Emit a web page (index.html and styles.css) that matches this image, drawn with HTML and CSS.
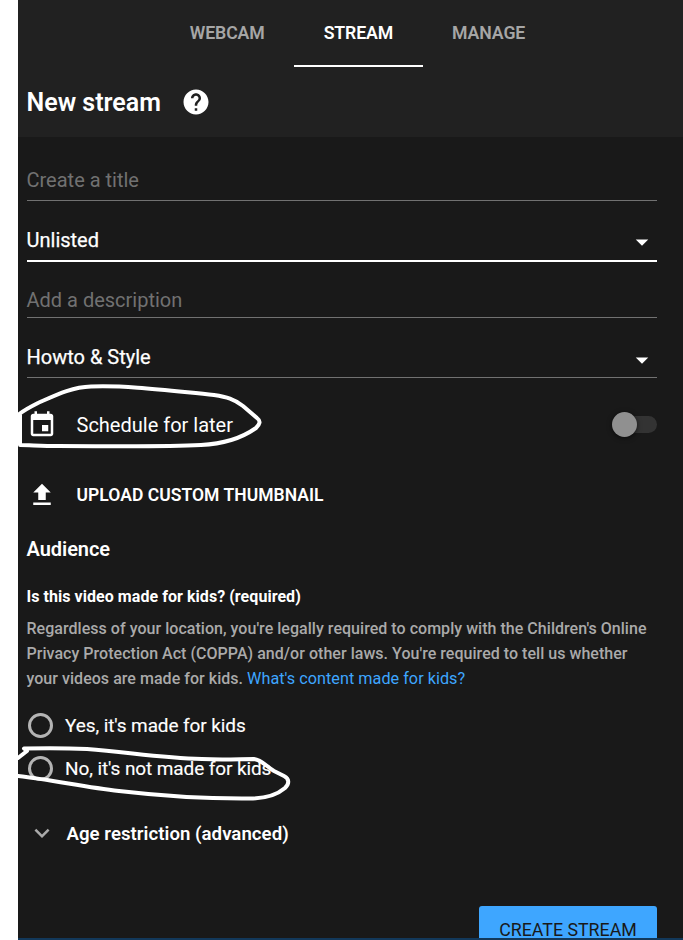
FILE: index.html
```html
<!DOCTYPE html>
<html lang="en">
<head>
<meta charset="utf-8">
<title>New stream</title>
<link rel="stylesheet" href="styles.css">
</head>
<body>
<main class="panel">
  <header class="top">
    <nav class="tabs">
      <a class="tab"><span>WEBCAM</span></a>
      <a class="tab active"><span>STREAM</span></a>
      <a class="tab"><span>MANAGE</span></a>
    </nav>
    <div class="heading">
      <h1>New stream</h1>
      <svg class="icon" viewBox="0 0 24 24"><path d="M12 2C6.48 2 2 6.48 2 12s4.48 10 10 10 10-4.48 10-10S17.52 2 12 2zm1 17h-2v-2h2v2zm2.07-7.75l-.9.92C13.45 12.9 13 13.5 13 15h-2v-.5c0-1.1.45-2.1 1.17-2.83l1.24-1.26c.37-.36.59-.86.59-1.41 0-1.1-.9-2-2-2s-2 .9-2 2H8c0-2.21 1.79-4 4-4s4 1.79 4 4c0 .88-.36 1.68-.93 2.25z"/></svg>
    </div>
  </header>
  <form class="form">
    <div class="field title"><span>Create a title</span></div>
    <div class="field privacy"><span>Unlisted</span><svg class="icon" viewBox="0 0 24 24"><path d="M7 10l5 5 5-5z"/></svg></div>
    <div class="field description"><span>Add a description</span></div>
    <div class="field category"><span>Howto &amp; Style</span><svg class="icon" viewBox="0 0 24 24"><path d="M7 10l5 5 5-5z"/></svg></div>
    <div class="row schedule">
      <svg class="icon" viewBox="0 0 24 24"><path d="M17 12h-5v5h5v-5zM16 1v2H8V1H6v2H5c-1.11 0-1.99.9-1.99 2L3 19c0 1.1.89 2 2 2h14c1.1 0 2-.9 2-2V5c0-1.1-.9-2-2-2h-1V1h-2zm3 18H5V8h14v11z"/></svg>
      <span>Schedule for later</span>
      <div class="toggle"><div class="track"></div><div class="knob"></div></div>
    </div>
    <div class="row upload">
      <svg class="icon" viewBox="0 0 24 24"><path d="M9 16h6v-6h4l-7-7-7 7h4zm-4 2h14v2H5z"/></svg>
      <span>UPLOAD CUSTOM THUMBNAIL</span>
    </div>
    <h2>Audience</h2>
    <h3>Is this video made for kids? (required)</h3>
    <p class="legal">Regardless of your location, you're legally required to comply with the Children's Online<br>Privacy Protection Act (COPPA) and/or other laws. You're required to tell us whether<br>your videos are made for kids. <a>What's content made for kids?</a></p>
    <div class="option"><i class="radio"></i><span>Yes, it's made for kids</span></div>
    <div class="option"><i class="radio"></i><span>No, it's not made for kids</span></div>
    <div class="age">
      <svg class="icon chevron" viewBox="0 0 24 24"><path d="M7.41 8.59L12 13.17l4.59-4.58L18 10l-6 6-6-6z"/></svg>
      <span>Age restriction (advanced)</span>
    </div>
    <div class="actions"><button type="button">CREATE STREAM</button></div>
  </form>
  <svg class="ink" viewBox="0 0 665 940">
    <path d="M0 415C6 410 12 407 20 403C38 395 54 387 73 386.500C110 385 154 391 196 395C209 397 216 399 225 406L239 418C243 421 242 424 238 428C224 438 205 444 183 445C143 447 90 446 40 446C24 446 11 445 2 445L2 415"/>
    <path d="M0 758L9 751L6 748.500C28 748 48 748 69 749C110 752 142 758 184 759C205 760 222 759 236 759C244 760 249 767 256 771L266 776C272 779 271 784 267 788C260 794 249 798 235 798.500C196 799 144 796 101 791C66 787 35 780 0 776"/>
  </svg>
  <div class="edge"></div>
</main>
</body>
</html>
```
FILE: styles.css
```css
* { box-sizing: border-box; }
body { margin: 0; background: #fff; font-family: Roboto, "Liberation Sans", sans-serif; color: #fff; overflow: hidden; }
.panel { position: relative; margin-left: 18px; width: 665px; height: 940px; background: #191919; overflow: hidden; }
.icon { width: 30px; height: 30px; fill: #fff; flex: none; display: block; }
.top { height: 137px; background: #212121; }
.tabs { height: 67px; display: flex; justify-content: center; padding-left: 14px; }
.tab { padding: 0 29.5px; height: 67px; display: flex; align-items: center; justify-content: center; font-size: 17.7px; font-weight: 600; letter-spacing: -.12px; color: #a6a6a6; border-bottom: 2px solid transparent; }
.tab.active { color: #fff; border-color: #fff; }
.heading { display: flex; align-items: center; height: 70px; padding-left: 8.5px; gap: 20px; }
h1, h2, h3, p { margin: 0; }
h1 { width: 134.5px; font-size: 25px; font-weight: 600; letter-spacing: 0; white-space: nowrap; }
.form { padding: 0 26px 0 9px; white-space: nowrap; }
.field { display: flex; align-items: center; justify-content: space-between; border-bottom: 1px solid #717171; font-size: 20px; }
.field span { margin-left: -.5px; }
.title, .description { color: #717171; }
.title { height: 64px; padding-top: 23px; }
.privacy { height: 61px; padding-top: 19px; border-bottom: 2px solid #fff; }
.privacy .icon { margin: 2px 0 -2px; }
.privacy span, .category span { -webkit-text-stroke: .25px #fff; }
.description { height: 56px; padding-top: 21px; }
.category { height: 60px; padding-top: 19px; }
.category .icon { margin: 3px 0 -3px; }
.row { display: flex; align-items: center; gap: 19.5px; font-size: 20px; }
.schedule { height: 94px; }
.toggle { margin: -2px 0 0 auto; width: 45px; height: 25px; display: flex; align-items: center; justify-content: flex-end; }
.track { width: 35px; height: 17px; border-radius: 9px; background: #333; flex: none; }
.knob { width: 25px; height: 25px; margin-left: -45px; margin-right: 20px; flex: none; border-radius: 50%; background: #909090; box-shadow: 0 1px 5px #0009; }
.upload { height: 46px; font-size: 17.5px; font-weight: 600; letter-spacing: .04px; }
h2 { height: 62px; line-height: 62px; margin-left: -.5px; font-size: 20px; font-weight: 600; letter-spacing: -.05px; }
h3 { height: 32px; line-height: 34px; margin-left: -.5px; font-size: 16px; font-weight: 700; letter-spacing: .05px; }
.legal { font-size: 16px; font-weight: 500; letter-spacing: .035px; line-height: 25px; height: 92px; padding-top: 4px; margin-left: -.5px; color: #aaa; }
.legal a { color: #3ea6ff; font-weight: 400; font-size: 16.2px; }
.option { display: flex; align-items: center; height: 43px; font-size: 19px; letter-spacing: -.1px; gap: 12px; padding-left: 1px; }
.option span { -webkit-text-stroke: .15px #fff; }
.radio { width: 25px; height: 25px; border: 3px solid #b4b4b4; border-radius: 50%; }
.age { display: flex; align-items: center; height: 86px; gap: 9.5px; font-size: 18.6px; font-weight: 600; letter-spacing: .05px; }
.age span { padding-top: 1px; }
.chevron { fill: #aaa; }
.actions { padding-top: 30px; display: flex; justify-content: flex-end; }
button { width: 178px; height: 46px; border: 0; border-radius: 3px; background: #3ea6ff; color: #191919; font: 17.8px Roboto, sans-serif; padding: 1px 0 0; }
.ink { position: absolute; inset: 0; width: 665px; height: 940px; fill: none; stroke: #fff; stroke-width: 4; stroke-linecap: round; stroke-linejoin: round; }
.edge { position: absolute; left: 0; right: 0; bottom: 0; height: 2px; background: #12385a; }
```
